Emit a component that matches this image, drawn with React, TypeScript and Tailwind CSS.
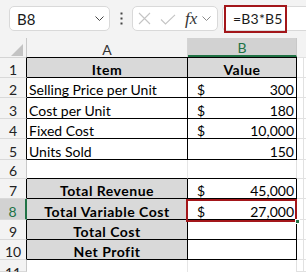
import React from "react";

type Row = {
  n: string;
  h: string;
  hdr: string;
  hdrBg: string;
  hdrText: string;
  a: React.ReactNode;
  aCls: string;
  b: React.ReactNode;
  bCls: string;
  extra?: string;
};

const BLACK_A = "border-r border-b border-black";
const BLACK_B = "border-r border-b border-black";

function Money({ v, dollar = true }: { v: string; dollar?: boolean }) {
  return (
    <div className="flex w-full items-end justify-between pl-[9px] pr-[2px]">
      <span>{dollar ? "$" : ""}</span>
      <span>{v}</span>
    </div>
  );
}

const rows: Row[] = [
  {
    n: "1",
    h: "h-[21px]",
    hdr: "items-end border-r border-r-black border-t border-t-[#d4d4d4]",
    hdrBg: "bg-[#f3f3f3]",
    hdrText: "text-[#222]",
    a: <div className="w-full text-center font-bold tracking-[0.5px]">Item</div>,
    aCls: "border-t border-r border-b border-black bg-[#d9d9d9]",
    b: <div className="w-full text-center font-bold tracking-[0.5px]">Value</div>,
    bCls: "border-t border-r border-b border-black bg-[#d9d9d9]",
    extra: "border-t border-t-[#e1e1e1]",
  },
  {
    n: "2",
    h: "h-[20px]",
    hdr: "items-end border-r border-r-black",
    hdrBg: "bg-[#f3f3f3]",
    hdrText: "text-[#222]",
    a: <div className="whitespace-nowrap pl-[2px]">Selling Price per Unit</div>,
    aCls: BLACK_A,
    b: <Money v="300" />,
    bCls: BLACK_B,
  },
  {
    n: "3",
    h: "h-[21px]",
    hdr: "items-end border-r border-r-black",
    hdrBg: "bg-[#f3f3f3]",
    hdrText: "text-[#222]",
    a: <div className="pl-[2px]">Cost per Unit</div>,
    aCls: BLACK_A,
    b: <Money v="180" />,
    bCls: BLACK_B,
  },
  {
    n: "4",
    h: "h-[20px]",
    hdr: "items-end border-r border-r-black",
    hdrBg: "bg-[#f3f3f3]",
    hdrText: "text-[#222]",
    a: <div className="pl-[2px]">Fixed Cost</div>,
    aCls: BLACK_A,
    b: <Money v="10,000" />,
    bCls: BLACK_B,
  },
  {
    n: "5",
    h: "h-[21px]",
    hdr: "items-end border-r border-r-black",
    hdrBg: "bg-[#f3f3f3]",
    hdrText: "text-[#222]",
    a: <div className="pl-[2px]">Units Sold</div>,
    aCls: BLACK_A,
    b: <Money v="150" dollar={false} />,
    bCls: BLACK_B,
  },
  {
    n: "6",
    h: "h-[19px]",
    hdr: "items-end border-r border-r-[#c8c8c8]",
    hdrBg: "bg-[#f3f3f3]",
    hdrText: "text-[#222]",
    a: null,
    aCls: "border-r border-r-[#e6e6e6] border-b border-b-black",
    b: null,
    bCls: "border-r border-r-[#e1e1e1] border-b border-b-black",
  },
  {
    n: "7",
    h: "h-[20px]",
    hdr: "items-end border-r border-r-black",
    hdrBg: "bg-[#f3f3f3]",
    hdrText: "text-[#222]",
    a: <div className="w-full text-center font-bold tracking-[0.5px]">Total Revenue</div>,
    aCls: BLACK_A + " bg-[#d9d9d9]",
    b: <Money v="45,000" />,
    bCls: BLACK_B,
  },
  {
    n: "8",
    h: "h-[21px]",
    hdr: "items-end border-r-2 border-r-[#217346]",
    hdrBg: "bg-[#d2d2d2]",
    hdrText: "text-[#217346]",
    a: <div className="w-full whitespace-nowrap text-center font-bold tracking-[0.5px]">Total Variable Cost</div>,
    aCls: BLACK_A + " bg-[#d9d9d9]",
    b: <Money v="27,000" />,
    bCls: BLACK_B,
  },
  {
    n: "9",
    h: "h-[20px]",
    hdr: "items-end border-r border-r-black",
    hdrBg: "bg-[#f3f3f3]",
    hdrText: "text-[#222]",
    a: <div className="w-full text-center font-bold tracking-[0.5px]">Total Cost</div>,
    aCls: BLACK_A + " bg-[#d9d9d9]",
    b: null,
    bCls: BLACK_B,
  },
  {
    n: "10",
    h: "h-[20px]",
    hdr: "items-end border-r border-r-black",
    hdrBg: "bg-[#f3f3f3]",
    hdrText: "text-[#222]",
    a: <div className="w-full text-center font-bold tracking-[0.5px]">Net Profit</div>,
    aCls: BLACK_A + " bg-[#d9d9d9]",
    b: null,
    bCls: BLACK_B,
  },
  {
    n: "11",
    h: "h-[12px] overflow-hidden",
    hdr: "items-start pt-[6px] border-r border-r-[#c8c8c8]",
    hdrBg: "bg-[#f3f3f3]",
    hdrText: "text-[#222]",
    a: null,
    aCls: "border-r border-r-[#e6e6e6]",
    b: null,
    bCls: "border-r border-r-[#e1e1e1]",
  },
];

function Chevron({ className }: { className: string }) {
  return (
    <svg width="9" height="5" viewBox="0 0 9 5" className={className}>
      <polyline points="0.5,0.5 4.5,4.5 8.5,0.5" fill="none" stroke="currentColor" strokeWidth="1" />
    </svg>
  );
}

export default function App() {
  return (
    <div className="relative h-[272px] w-[306px] overflow-hidden bg-white font-['Lato',sans-serif] text-[14px] leading-[14px] text-black">
      {/* Toolbar */}
      <div className="flex h-[38px] items-start bg-[#f3f3f3] pt-[6px]">
        <div className="ml-[9px] flex h-[25px] w-[101px] items-center justify-between rounded-[5px] border border-[#d9d9d9] bg-white pl-[7px] pr-[5px]">
          <span className="text-[15px] text-[#1a1a1a]">B8</span>
          <Chevron className="text-[#444]" />
        </div>
        <div className="flex h-[25px] w-[22px] items-center justify-center">
          <svg width="3" height="13" viewBox="0 0 3 13">
            <rect x="0.5" y="0.5" width="2" height="2" fill="#444" />
            <rect x="0.5" y="5.5" width="2" height="2" fill="#444" />
            <rect x="0.5" y="10.5" width="2" height="2" fill="#444" />
          </svg>
        </div>
        <div className="flex h-[25px] w-[86px] items-center rounded-[5px] border border-[#d9d9d9] bg-white pl-[5px]">
          <svg width="13" height="13" viewBox="0 0 13 13" className="text-[#c4c4c4]">
            <path d="M1 1 L12 12 M12 1 L1 12" stroke="currentColor" strokeWidth="1.1" fill="none" />
          </svg>
          <svg width="16" height="11" viewBox="0 0 16 11" className="ml-[9px] mt-[2px] text-[#c4c4c4]">
            <path d="M1 5.5 L5.5 10 L15 0.8" stroke="currentColor" strokeWidth="1.1" fill="none" />
          </svg>
          <span className="ml-[9px] font-['Liberation_Serif',serif] text-[17px] italic leading-[17px] text-[#333]">
            fx
          </span>
          <Chevron className="ml-[5px] text-[#8a8a8a]" />
        </div>
        <div className="ml-[4px] flex h-[25px] flex-1 items-center rounded-l-[5px] border-y border-l border-[#d9d9d9] bg-white pl-[10px]">
          <span className="text-[14px] tracking-[0.2px] text-[#1a1a1a]">=B3*B5</span>
        </div>
      </div>

      {/* Column header row */}
      <div className="flex h-[19px]">
        <div className="flex w-[27px] shrink-0 items-end justify-end border-r border-[#c8c8c8] bg-[#f3f3f3] pb-[1px] pr-[3px]">
          <svg width="12" height="12" viewBox="0 0 12 12">
            <polygon points="12,0 12,12 0,12" fill="#c3c3c3" />
          </svg>
        </div>
        <div className="flex w-[161px] shrink-0 items-end justify-center border-r border-[#d4d4d4] bg-[#f3f3f3] text-[#333]">
          A
        </div>
        <div className="flex w-[109px] shrink-0 items-end justify-center border-b-2 border-r border-b-[#217346] border-r-[#c8c8c8] bg-[#d2d2d2] text-[#217346]">
          B
        </div>
        <div className="flex-1 bg-[#f3f3f3]" />
      </div>

      {/* Grid rows */}
      <div className="flex flex-col">
        {rows.map((r) => (
          <div key={r.n} className={`flex ${r.h}`}>
            <div
              className={`flex w-[27px] shrink-0 justify-center border-b border-b-[#d9d9d9] ${r.hdr} ${r.hdrBg} ${r.hdrText}`}
            >
              {r.n}
            </div>
            <div className={`flex w-[161px] shrink-0 items-end ${r.aCls}`}>{r.a}</div>
            <div className={`flex w-[109px] shrink-0 items-end ${r.bCls}`}>{r.b}</div>
            <div className={`w-[7px] shrink-0 border-r border-b border-[#e1e1e1] ${r.extra ?? ""}`} />
            <div className={`flex-1 border-b border-[#e1e1e1] ${r.extra ?? ""}`} />
          </div>
        ))}
      </div>

      {/* Annotation boxes */}
      <div className="pointer-events-none absolute left-[224px] top-[5px] h-[28px] w-[63px] border-2 border-[#a3161a]" />
      <div className="pointer-events-none absolute left-[186px] top-[199px] h-[23px] w-[111px] border-2 border-[#a3161a]" />
      <div className="pointer-events-none absolute left-[295px] top-[219px] h-[5px] w-[5px] border border-white bg-[#217346]" />
    </div>
  );
}
